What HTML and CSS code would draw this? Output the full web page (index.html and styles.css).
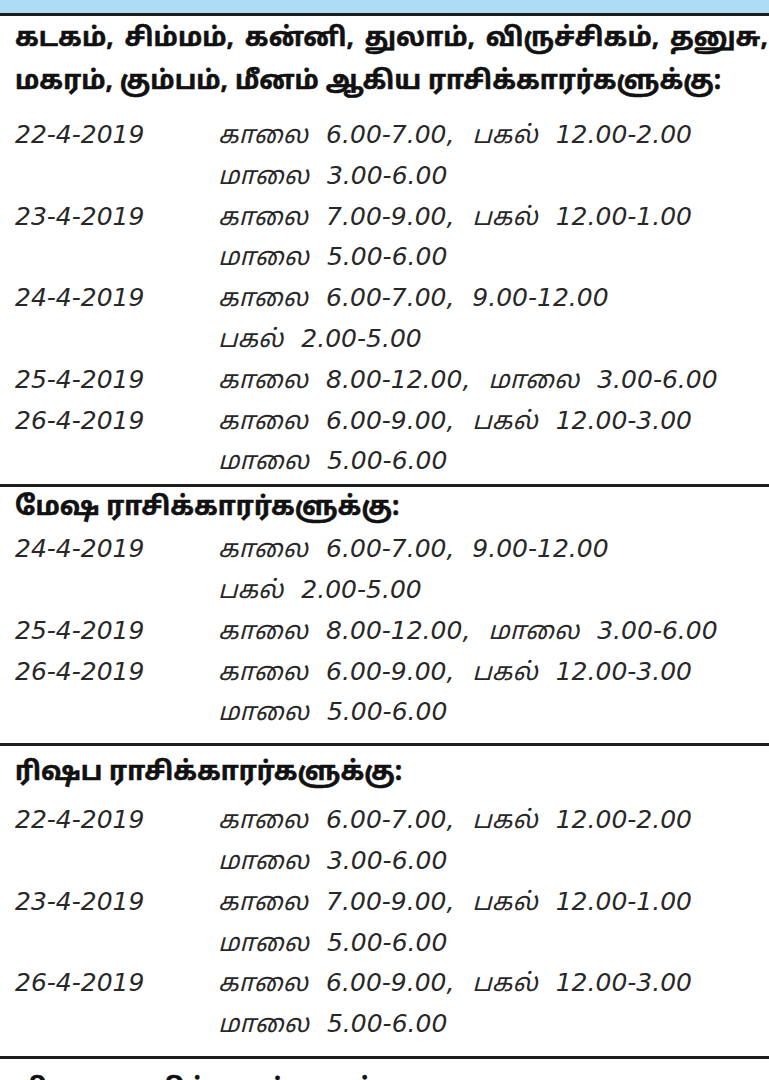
FILE: index.html
```html
<!DOCTYPE html>
<html lang="ta">
<head>
<meta charset="utf-8">
<title>ராசிக்காரர்களுக்கு நேரம்</title>
<link rel="stylesheet" href="styles.css">
</head>
<body>
<div class="page">
  <div class="band"></div>

  <section class="block block-first">
    <div class="head head-double">
      <div class="head-wide">கடகம், சிம்மம், கன்னி, துலாம், விருச்சிகம், தனுசு,</div>
      <div>மகரம், கும்பம், மீனம் ஆகிய ராசிக்காரர்களுக்கு:</div>
    </div>
    <div class="rows rows-first">
      <div class="row"><span class="date">22-4-2019</span><span class="time"><span>காலை 6.00-7.00, பகல் 12.00-2.00</span><span>மாலை 3.00-6.00</span></span></div>
      <div class="row"><span class="date">23-4-2019</span><span class="time"><span>காலை 7.00-9.00, பகல் 12.00-1.00</span><span>மாலை 5.00-6.00</span></span></div>
      <div class="row"><span class="date">24-4-2019</span><span class="time"><span>காலை 6.00-7.00, 9.00-12.00</span><span>பகல் 2.00-5.00</span></span></div>
      <div class="row"><span class="date">25-4-2019</span><span class="time"><span>காலை 8.00-12.00, மாலை 3.00-6.00</span></span></div>
      <div class="row"><span class="date">26-4-2019</span><span class="time"><span>காலை 6.00-9.00, பகல் 12.00-3.00</span><span>மாலை 5.00-6.00</span></span></div>
    </div>
  </section>

  <section class="block block-second">
    <div class="head head-second">மேஷ ராசிக்காரர்களுக்கு:</div>
    <div class="rows rows-second">
      <div class="row"><span class="date">24-4-2019</span><span class="time"><span>காலை 6.00-7.00, 9.00-12.00</span><span>பகல் 2.00-5.00</span></span></div>
      <div class="row"><span class="date">25-4-2019</span><span class="time"><span>காலை 8.00-12.00, மாலை 3.00-6.00</span></span></div>
      <div class="row"><span class="date">26-4-2019</span><span class="time"><span>காலை 6.00-9.00, பகல் 12.00-3.00</span><span>மாலை 5.00-6.00</span></span></div>
    </div>
  </section>

  <section class="block block-third">
    <div class="head head-third">ரிஷப ராசிக்காரர்களுக்கு:</div>
    <div class="rows rows-third">
      <div class="row"><span class="date">22-4-2019</span><span class="time"><span>காலை 6.00-7.00, பகல் 12.00-2.00</span><span>மாலை 3.00-6.00</span></span></div>
      <div class="row"><span class="date">23-4-2019</span><span class="time"><span>காலை 7.00-9.00, பகல் 12.00-1.00</span><span>மாலை 5.00-6.00</span></span></div>
      <div class="row"><span class="date">26-4-2019</span><span class="time"><span>காலை 6.00-9.00, பகல் 12.00-3.00</span><span>மாலை 5.00-6.00</span></span></div>
    </div>
  </section>

  <section class="block block-fourth">
    <div class="head head-fourth">மிதுன ராசிக்காரர்களுக்கு:</div>
  </section>
</div>
</body>
</html>
```

FILE: styles.css
```css
html, body {
  margin: 0;
  padding: 0;
  background: #ffffff;
}

.page {
  width: 769px;
  height: 1080px;
  overflow: hidden;
  color: #1b1b1b;
  background: #ffffff;
}

.band {
  height: 13px;
  background: #aedcf4;
}

.block {
  border-top: 3px solid #1e1e1e;
}

.head {
  font-family: "Noto Sans Tamil", "Lohit Tamil", "Noto Serif Tamil", "FreeSans", "Noto Sans", sans-serif;
  font-weight: 700;
  font-size: 26px;
  line-height: 43px;
  color: #111111;
  -webkit-text-stroke: 0.5px #111111;
  padding-left: 15px;
  white-space: nowrap;
}

.head-double {
  padding-top: 2px;
  padding-bottom: 13px;
}

.head-wide {
  word-spacing: 4px;
}

.head-second {
  padding-top: 0;
}

.head-third {
  padding-top: 6px;
}

.head-fourth {
  padding-top: 10px;
}

.rows {
  display: flex;
  flex-direction: column;
}

.rows-first {
  margin-top: -2px;
  padding-bottom: 2px;
}

.rows-second {
  margin-top: -1px;
  padding-bottom: 10px;
}

.rows-third {
  padding-top: 5px;
  padding-bottom: 11px;
}

.row {
  display: grid;
  grid-template-columns: 218px 1fr;
  font-size: 25px;
  line-height: 40.8px;
  font-style: italic;
  color: #282828;
  white-space: nowrap;
}

.date {
  padding-left: 15px;
  font-family: "DejaVu Sans", "Noto Sans Tamil", "Lohit Tamil", sans-serif;
}

.time {
  display: flex;
  flex-direction: column;
  word-spacing: 10px;
  font-family: "DejaVu Sans", "Noto Sans Tamil", "Lohit Tamil", "Noto Serif Tamil", sans-serif;
}
```
